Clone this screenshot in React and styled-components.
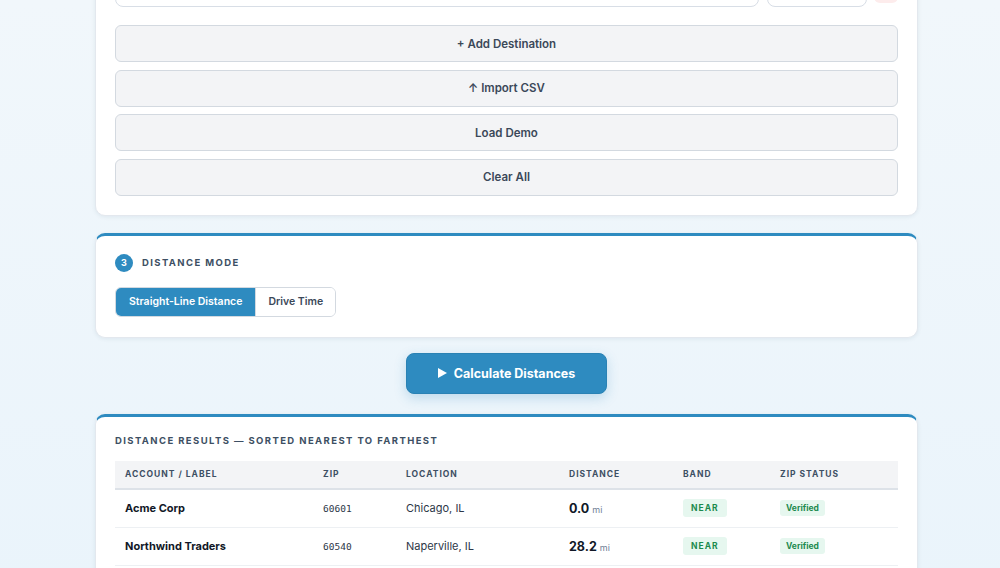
import React from 'react';
import styled, { createGlobalStyle } from 'styled-components';

const GlobalStyle = createGlobalStyle`
	html, body {
		margin: 0;
		padding: 0;
		background: linear-gradient(180deg, #f1f7fb 0%, #eaf4fb 100%);
		font-family: Inter, "Noto Sans", sans-serif;
		color: #1a202c;
		overflow: hidden;
	}
`;

const Page = styled.main`
	width: 823px;
	margin: -49px 0 0 95px;
	display: flex;
	flex-direction: column;
	gap: 17px;
`;

const Card = styled.section`
	background: #fff;
	border: 1px solid #e3e8ee;
	border-top: ${({ $accent }) => ($accent ? '3px solid #2e8bc0' : '1px solid #e3e8ee')};
	border-radius: 10px;
	box-shadow: 0 1px 4px rgba(30, 60, 90, 0.08);
	padding: ${({ $accent }) => ($accent ? '18px 19px 20px' : '19px 19px 19px')};
	box-sizing: border-box;
`;

const DestRow = styled.div`
	display: flex;
	gap: 8px;
	height: 36px;
	margin-bottom: 18px;
`;

const Input = styled.div`
	flex: ${({ $grow }) => ($grow ? 1 : 'none')};
	width: ${({ $w }) => $w || 'auto'};
	border: 1px solid #d8dee6;
	border-radius: 8px;
	background: #fff;
`;

const RemoveBtn = styled.div`
	width: 24px;
	height: 32px;
	margin-left: -1px;
	border-radius: 6px;
	background: #fdecec;
`;

const Actions = styled.div`
	display: flex;
	flex-direction: column;
	gap: 7.5px;
`;

const ActionButton = styled.button`
	height: 37px;
	border: 1px solid #d3d9e0;
	border-radius: 6px;
	background: #f3f4f6;
	color: #3b4859;
	font-family: Inter, sans-serif;
	font-size: 11.5px;
	font-weight: 600;
	cursor: pointer;
`;

const StepHead = styled.div`
	display: flex;
	align-items: center;
	gap: 9px;
	margin-bottom: 15px;
`;

const StepNum = styled.span`
	width: 18px;
	height: 18px;
	border-radius: 50%;
	background: #2e8bc0;
	color: #fff;
	font-size: 9px;
	font-weight: 700;
	display: flex;
	align-items: center;
	justify-content: center;
`;

const Label = styled.h3`
	margin: 0;
	font-size: 9.5px;
	font-weight: 700;
	letter-spacing: 1.4px;
	text-transform: uppercase;
	color: #3d4f63;
`;

const Toggle = styled.div`
	display: inline-flex;
	border: 1px solid #d3d9e0;
	border-radius: 6px;
	overflow: hidden;
	height: 30px;
	box-sizing: border-box;
`;

const ToggleOption = styled.button`
	border: none;
	padding: 0 ${({ $active }) => ($active ? '13px' : '12px')};
	background: ${({ $active }) => ($active ? '#2e8bc0' : '#fff')};
	color: ${({ $active }) => ($active ? '#fff' : '#3b4859')};
	font-family: Inter, sans-serif;
	font-size: 10.5px;
	font-weight: 600;
	& + & {
		border-left: 1px solid #d3d9e0;
	}
`;

const CalcWrap = styled.div`
	display: flex;
	justify-content: center;
	margin: -2px 0 3px;
`;

const CalcButton = styled.button`
	width: 201px;
	height: 41px;
	border: 1px solid #2a82b4;
	border-radius: 8px;
	background: #2e8bc0;
	color: #fff;
	font-family: Inter, sans-serif;
	font-size: 12.5px;
	font-weight: 700;
	display: flex;
	align-items: center;
	justify-content: center;
	gap: 7px;
	box-shadow: 0 4px 12px rgba(46, 139, 192, 0.25);
`;

const Table = styled.table`
	width: 100%;
	margin-top: 15px;
	border-collapse: collapse;
	table-layout: fixed;
`;

const Th = styled.th`
	box-sizing: border-box;
	width: ${({ $w }) => ($w ? `${$w}px` : 'auto')};
	height: 28px;
	padding: 0 10px;
	background: #f3f4f6;
	border-bottom: 2px solid #dde2e8;
	text-align: left;
	font-size: 8.5px;
	font-weight: 700;
	letter-spacing: 1px;
	text-transform: uppercase;
	color: #3d4f63;
	white-space: nowrap;
`;

const Td = styled.td`
	height: 37px;
	padding: 0 10px;
	border-bottom: 1px solid #edf0f3;
	font-size: 11px;
	color: #2d3748;
`;

const Name = styled.span`
	font-weight: 700;
	color: #111827;
`;

const Zip = styled.span`
	font-family: "DejaVu Sans Mono", "Liberation Mono", monospace;
	font-size: 9.5px;
	color: #2d3748;
`;

const Dist = styled.span`
	font-size: 12.5px;
	font-weight: 700;
	color: #111827;
	small {
		font-size: 9px;
		font-weight: 400;
		color: #718096;
		margin-left: 3px;
	}
`;

const Badge = styled.span`
	display: inline-block;
	padding: ${({ $caps }) => ($caps ? '4px 8px' : '3px 6px')};
	border-radius: 3px;
	background: #e6f7ef;
	color: #1c8a4e;
	font-size: 8.5px;
	font-weight: 700;
	letter-spacing: ${({ $caps }) => ($caps ? '1px' : '0')};
`;

const rows = [
	{ name: 'Acme Corp', zip: '60601', loc: 'Chicago, IL', dist: '0.0', band: 'NEAR' },
	{ name: 'Northwind Traders', zip: '60540', loc: 'Naperville, IL', dist: '28.2', band: 'NEAR' },
];

const App = () => {
	return (
		<>
			<GlobalStyle />
			<Page>
				<Card>
					<DestRow>
						<Input $grow />
						<Input $w="98px" />
						<RemoveBtn />
					</DestRow>
					<Actions>
						<ActionButton>+ Add Destination</ActionButton>
						<ActionButton>↑ Import CSV</ActionButton>
						<ActionButton>Load Demo</ActionButton>
						<ActionButton>Clear All</ActionButton>
					</Actions>
				</Card>

				<Card $accent>
					<StepHead>
						<StepNum>3</StepNum>
						<Label>Distance Mode</Label>
					</StepHead>
					<Toggle>
						<ToggleOption $active>Straight-Line Distance</ToggleOption>
						<ToggleOption>Drive Time</ToggleOption>
					</Toggle>
				</Card>

				<CalcWrap>
					<CalcButton>
						<svg width="9" height="10" viewBox="0 0 9 10">
							<path d="M0 0 L9 5 L0 10 Z" fill="#fff" />
						</svg>
						Calculate Distances
					</CalcButton>
				</CalcWrap>

				<Card $accent>
					<Label>Distance Results — Sorted Nearest to Farthest</Label>
					<Table>
						<thead>
							<tr>
								<Th $w={198}>Account / Label</Th>
								<Th $w={83}>ZIP</Th>
								<Th $w={163}>Location</Th>
								<Th $w={114}>Distance</Th>
								<Th $w={97}>Band</Th>
								<Th>ZIP Status</Th>
							</tr>
						</thead>
						<tbody>
							{rows.map((r) => (
								<tr key={r.zip}>
									<Td><Name>{r.name}</Name></Td>
									<Td><Zip>{r.zip}</Zip></Td>
									<Td>{r.loc}</Td>
									<Td><Dist>{r.dist}<small>mi</small></Dist></Td>
									<Td><Badge $caps>{r.band}</Badge></Td>
									<Td><Badge>Verified</Badge></Td>
								</tr>
							))}
						</tbody>
					</Table>
				</Card>
			</Page>
		</>
	);
};

export default App;
